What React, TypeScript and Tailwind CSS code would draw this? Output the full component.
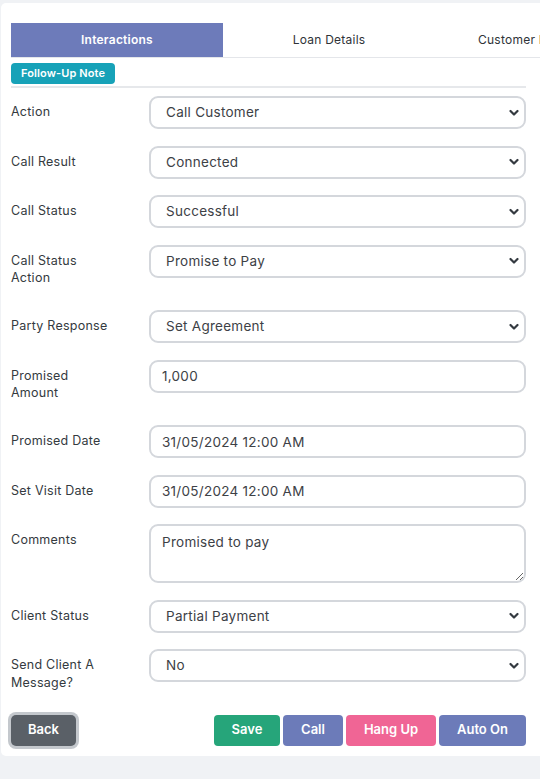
import { useState } from "react";

const FONT = { fontFamily: "Inter, 'Open Sans', Arial, sans-serif" };

type Row =
  | { label: string; kind: "select"; value: string }
  | { label: string; kind: "input"; value: string }
  | { label: string; kind: "textarea"; value: string };

const rows: Row[] = [
  { label: "Action", kind: "select", value: "Call Customer" },
  { label: "Call Result", kind: "select", value: "Connected" },
  { label: "Call Status", kind: "select", value: "Successful" },
  { label: "Call Status Action", kind: "select", value: "Promise to Pay" },
  { label: "Party Response", kind: "select", value: "Set Agreement" },
  { label: "Promised Amount", kind: "input", value: "1,000" },
  { label: "Promised Date", kind: "input", value: "31/05/2024 12:00 AM" },
  { label: "Set Visit Date", kind: "input", value: "31/05/2024 12:00 AM" },
  { label: "Comments", kind: "textarea", value: "Promised to pay" },
  { label: "Client Status", kind: "select", value: "Partial Payment" },
  { label: "Send Client A Message?", kind: "select", value: "No" },
];

function Chevron() {
  return (
    <svg width="10" height="7" viewBox="0 0 10 7" className="pointer-events-none absolute right-[7px] top-1/2 -translate-y-1/2">
      <path d="M1.5 1.5 L5 5 L8.5 1.5" fill="none" stroke="#343a40" strokeWidth="2.2" strokeLinecap="round" strokeLinejoin="round" />
    </svg>
  );
}

function Field({ row }: { row: Row }) {
  const [val, setVal] = useState(row.value);
  const base = "w-full border-2 border-[#d4d7dc] rounded-[9px] bg-white text-[13.5px] text-[#3d4146] tracking-[0.02em] outline-none";
  if (row.kind === "select") {
    return (
      <div className="relative">
        <select value={val} onChange={e => setVal(e.target.value)} className={`${base} h-[33px] appearance-none pl-[15px] pr-8`}>
          <option>{row.value}</option>
        </select>
        <Chevron />
      </div>
    );
  }
  if (row.kind === "textarea") {
    return (
      <textarea value={val} onChange={e => setVal(e.target.value)} className={`${base} h-[59px] block px-[11px] py-[6px] leading-[20px]`} />
    );
  }
  return <input value={val} onChange={e => setVal(e.target.value)} className={`${base} h-[33px] px-[11px]`} />;
}

export default function App() {
  const [tab, setTab] = useState(0);
  const tabs = ["Interactions", "Loan Details", "Customer Details"];

  return (
    <div style={FONT} className="w-[540px] h-[779px] overflow-hidden bg-[#f0f2f5] pt-[3px] pl-[1px]">
      <div className="w-[560px] bg-white rounded-[5px] pl-[10px] pr-[24px] pt-[20px] pb-[10px]">
        <div className="flex border-b border-[#e4e6ea] w-[540px] overflow-hidden">
          {tabs.map((t, i) => (
            <button
              key={t}
              onClick={() => setTab(i)}
              className={`shrink-0 w-[212px] h-[34px] text-[12px] tracking-[0.02em] whitespace-nowrap ${i === 2 ? "text-left pl-[43px]" : ""} ${tab === i ? "bg-[#6d7bba] text-white font-semibold" : "text-[#2f3338]"}`}
            >
              {t}
            </button>
          ))}
        </div>

        <div className="flex mt-[5px]">
          <div className="flex items-center h-[21px] px-[10px] rounded-[4px] bg-[#17a2b8] text-white text-[11px] leading-none font-semibold tracking-[0.01em]">
            Follow-Up Note
          </div>
        </div>
        <div className="h-[2px] bg-[#e6e8eb] mt-[2px] mb-[8px] w-[515px]" />

        <form className="w-[515px]" onSubmit={e => e.preventDefault()}>
          {rows.map(r => (
            <div key={r.label} className="grid grid-cols-[138px_1fr] items-start mb-[16.5px]">
              <label className="py-[7px] pr-[36px] text-[12.5px] leading-[17.5px] text-[#343a40] tracking-[0.02em]">{r.label}</label>
              <Field row={r} />
            </div>
          ))}

          <div className="flex items-center mt-[3px]">
            <button type="button" className="w-[65px] h-[31px] rounded-[5px] bg-[#5a6067] text-white text-[13px] font-semibold ring-[3px] ring-[#c4c8cd]">
              Back
            </button>
            <div className="ml-auto flex gap-[3px]">
              <button type="button" className="w-[66px] h-[31px] rounded-[4px] bg-[#26a57a] text-white text-[13px] font-semibold">Save</button>
              <button type="button" className="w-[60px] h-[31px] rounded-[4px] bg-[#6c7bb9] text-white text-[13px] font-semibold">Call</button>
              <button type="button" className="w-[90px] h-[31px] rounded-[4px] bg-[#f06595] text-white text-[13px] font-semibold">Hang Up</button>
              <button type="button" className="w-[87px] h-[31px] rounded-[4px] bg-[#6c7bb9] text-white text-[13px] font-semibold">Auto On</button>
            </div>
          </div>
        </form>
      </div>
    </div>
  );
}
